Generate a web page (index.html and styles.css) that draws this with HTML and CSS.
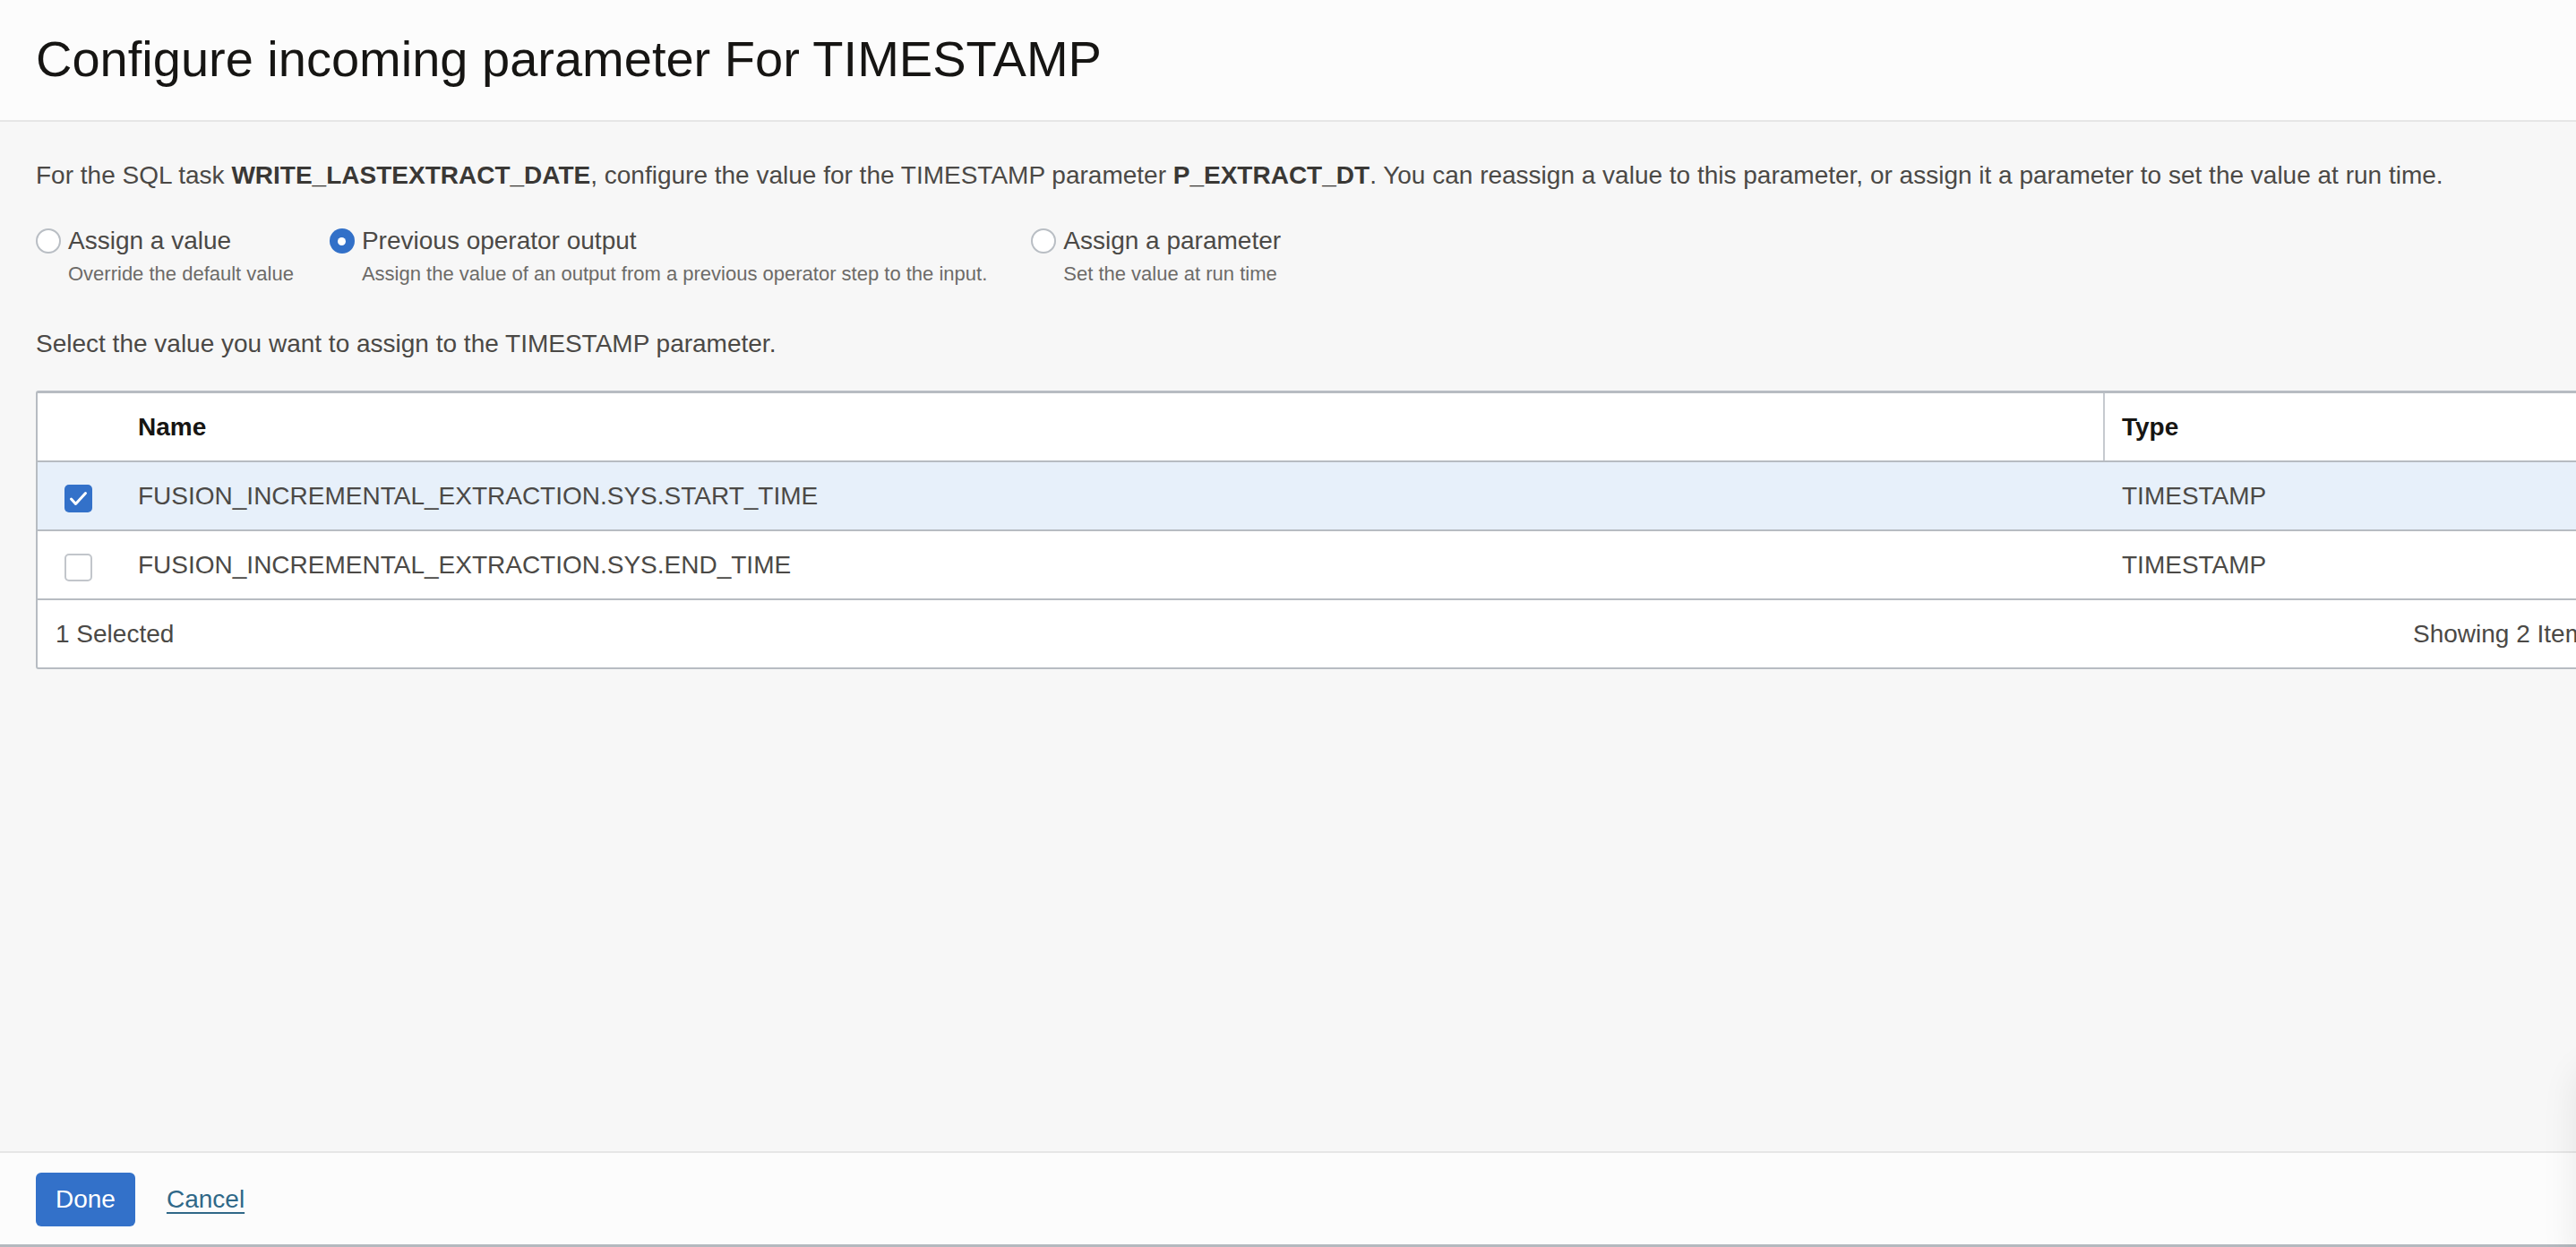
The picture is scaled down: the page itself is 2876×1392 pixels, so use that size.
FILE: index.html
```html
<!DOCTYPE html>
<html lang="en">

<head>
    <meta charset="UTF-8">
    <meta name="viewport" content="width=device-width, initial-scale=1.0">
    <title>Configure incoming parameter</title>
    <link rel="stylesheet" href="styles.css">
</head>

<body>

    <div class="dialog">
        <!-- Header -->
        <div class="dialog-header">
            <h1>Configure incoming parameter For TIMESTAMP</h1>
        </div>

        <!-- Body -->
        <div class="dialog-body">
            <p class="intro">For the SQL task <b>WRITE_LASTEXTRACT_DATE</b>, configure the value for the TIMESTAMP parameter <b>P_EXTRACT_DT</b>. You can reassign a value to this parameter, or assign it a parameter to set the value at run time.</p>

            <div class="radio-set">
                <div class="radio-option">
                    <div class="radio-line">
                        <span class="radio"></span>
                        <span class="radio-label">Assign a value</span>
                    </div>
                    <div class="radio-help">Override the default value</div>
                </div>
                <div class="radio-option">
                    <div class="radio-line">
                        <span class="radio checked"></span>
                        <span class="radio-label">Previous operator output</span>
                    </div>
                    <div class="radio-help">Assign the value of an output from a previous operator step to the input.</div>
                </div>
                <div class="radio-option">
                    <div class="radio-line">
                        <span class="radio"></span>
                        <span class="radio-label">Assign a parameter</span>
                    </div>
                    <div class="radio-help">Set the value at run time</div>
                </div>
            </div>

            <p class="hint">Select the value you want to assign to the TIMESTAMP parameter.</p>

            <!-- Table -->
            <div class="table">
                <div class="row head">
                    <div class="cell check-cell"></div>
                    <div class="cell name-cell">Name</div>
                    <div class="cell type-cell">Type</div>
                </div>
                <div class="row selected">
                    <div class="cell check-cell">
                        <span class="checkbox checked">
                            <svg viewBox="0 0 31 31" width="31" height="31"><polyline points="7.5,16 12.5,21.5 23.5,9.5" fill="none" stroke="#fff" stroke-width="3" stroke-linecap="round" stroke-linejoin="round"/></svg>
                        </span>
                    </div>
                    <div class="cell name-cell">FUSION_INCREMENTAL_EXTRACTION.SYS.START_TIME</div>
                    <div class="cell type-cell">TIMESTAMP</div>
                </div>
                <div class="row">
                    <div class="cell check-cell">
                        <span class="checkbox"></span>
                    </div>
                    <div class="cell name-cell">FUSION_INCREMENTAL_EXTRACTION.SYS.END_TIME</div>
                    <div class="cell type-cell">TIMESTAMP</div>
                </div>
                <div class="table-footer">
                    <span>1 Selected</span>
                    <span>Showing 2 Items</span>
                </div>
            </div>
        </div>

        <!-- Footer -->
        <div class="dialog-footer">
            <button class="btn-primary">Done</button>
            <a href="#" class="link">Cancel</a>
        </div>

        <div class="side-shadow"></div>
    </div>

</body>

</html>
```

FILE: styles.css
```css
html, body {
    margin: 0;
    padding: 0;
    height: 100%;
    overflow: hidden;
}

body {
    font-family: "Liberation Sans", Arial, sans-serif;
    color: #4b4946;
    background-color: #f7f7f7;
}

.dialog {
    position: relative;
    display: flex;
    flex-direction: column;
    height: 100vh;
    box-sizing: border-box;
    border-bottom: 3px solid #b4b9be;
}

/* Header */
.dialog-header {
    background-color: #fcfcfc;
    border-bottom: 2px solid #e6e6e6;
    padding: 32px 40px 34px;
}

h1 {
    margin: 0;
    font-size: 56px;
    line-height: 68px;
    font-weight: normal;
    color: #161513;
}

/* Body */
.dialog-body {
    flex: 1;
    padding: 40px 0 0 40px;
}

.intro {
    margin: 0;
    font-size: 28px;
    line-height: 40px;
    white-space: nowrap;
}

.intro b {
    color: #3a3835;
}

.radio-set {
    display: flex;
    gap: 40px;
    margin-top: 33px;
}

.radio-option:last-child {
    margin-left: 9px;
}

.radio-line {
    display: flex;
    align-items: center;
    gap: 8px;
}

.radio {
    width: 28px;
    height: 28px;
    box-sizing: border-box;
    border: 2px solid #b9bec4;
    border-radius: 50%;
    background-color: #fff;
    display: flex;
    align-items: center;
    justify-content: center;
}

.radio.checked {
    border: none;
    background-color: #3270c8;
}

.radio.checked::after {
    content: "";
    width: 9px;
    height: 9px;
    border-radius: 50%;
    background-color: #fff;
}

.radio-label {
    font-size: 28px;
    line-height: 40px;
}

.radio-help {
    margin-left: 36px;
    margin-top: 2px;
    font-size: 22px;
    line-height: 30px;
    color: #6d6b68;
}

.hint {
    margin: 43px 0 0;
    font-size: 28px;
    line-height: 40px;
}

/* Tabulka */
.table {
    margin-top: 32px;
    width: 2883px;
    background-color: #fff;
    border: 2px solid #b7bcc2;
    border-top-width: 3px;
    border-radius: 3px 0 0 3px;
    font-size: 28px;
}

.row {
    display: flex;
    height: 75px;
    border-bottom: 2px solid #b7bcc2;
}

.row.selected {
    background-color: #e7f0fa;
}

.cell {
    display: flex;
    align-items: center;
    box-sizing: border-box;
}

.check-cell {
    width: 93px;
    padding-left: 30px;
}

.name-cell {
    width: 2213px;
    padding-left: 19px;
}

.type-cell {
    flex: 1;
    padding-left: 21px;
}

.head .cell {
    font-weight: bold;
    color: #161513;
}

.head .type-cell {
    border-left: 2px solid #c6cacf;
    padding-left: 19px;
}

.checkbox {
    width: 31px;
    height: 31px;
    box-sizing: border-box;
    border: 2px solid #c2c6cb;
    border-radius: 5px;
    background-color: #fff;
    margin-top: 5px;
}

.checkbox.checked {
    border: none;
    background-color: #3371c9;
}

.checkbox svg {
    display: block;
}

.table-footer {
    display: flex;
    justify-content: space-between;
    align-items: center;
    height: 75px;
    padding: 0 24px 0 20px;
}

/* Footer */
.dialog-footer {
    display: flex;
    align-items: center;
    gap: 35px;
    background-color: #fcfcfc;
    border-top: 2px solid #e6e6e6;
    padding: 22px 40px 20px;
}

.btn-primary {
    height: 60px;
    padding: 0 22px;
    font-family: inherit;
    font-size: 28px;
    color: #fff;
    background-color: #3371c9;
    border: none;
    border-radius: 6px;
    cursor: pointer;
}

.link {
    font-size: 28px;
    color: #2f6888;
    text-decoration: underline;
    text-underline-offset: 5px;
    text-decoration-thickness: 2px;
}

/* Stín panelu vpravo dole */
.side-shadow {
    position: absolute;
    right: -60px;
    bottom: -40px;
    width: 60px;
    height: 240px;
    border-radius: 30px;
    box-shadow: 0 0 40px rgba(0, 0, 0, 0.08);
}
```
